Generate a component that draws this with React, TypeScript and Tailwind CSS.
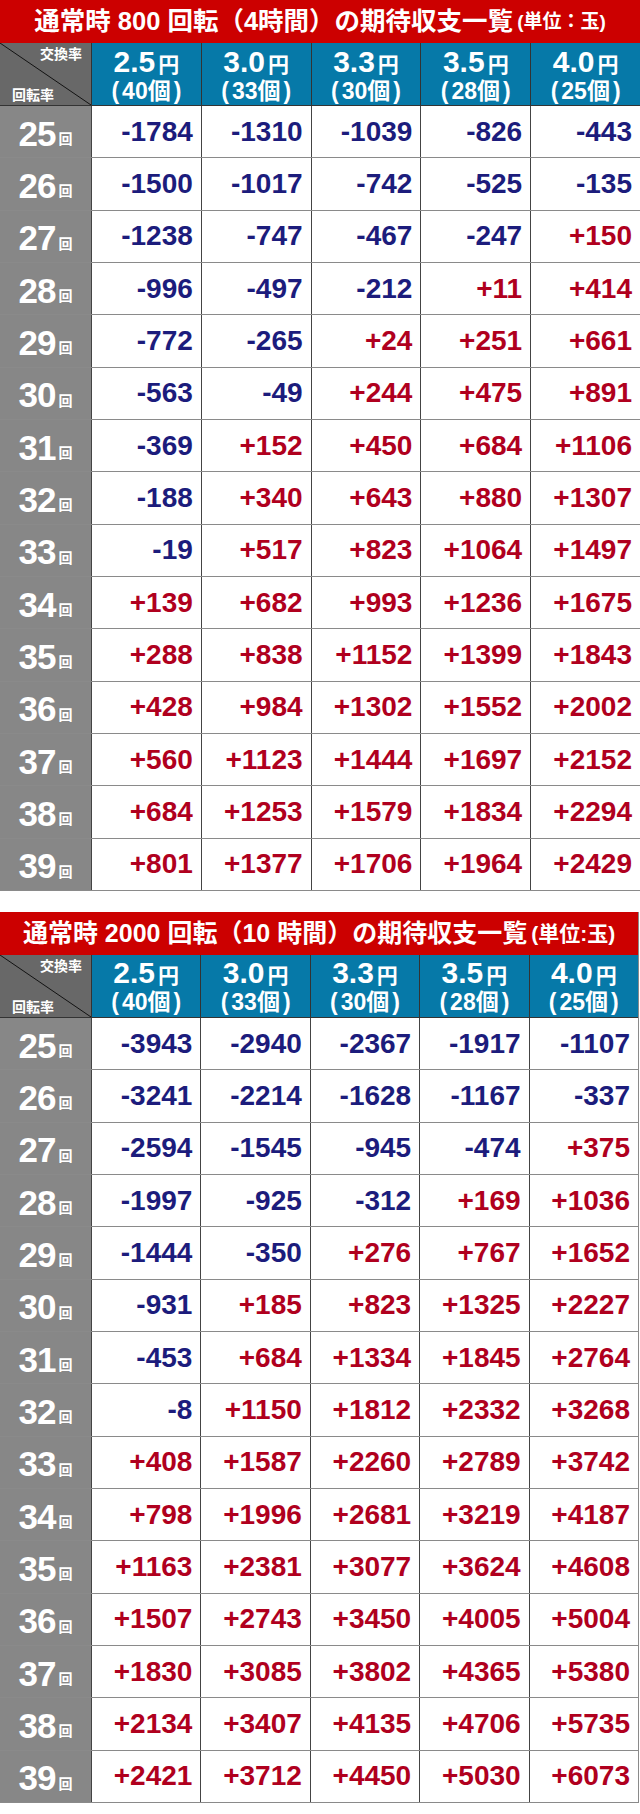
const rates = [
  { yen: '2.5', ko: '40' },
  { yen: '3.0', ko: '33' },
  { yen: '3.3', ko: '30' },
  { yen: '3.5', ko: '28' },
  { yen: '4.0', ko: '25' },
];

const spins = [25, 26, 27, 28, 29, 30, 31, 32, 33, 34, 35, 36, 37, 38, 39];

const table4h = [
  ['-1784', '-1310', '-1039', '-826', '-443'],
  ['-1500', '-1017', '-742', '-525', '-135'],
  ['-1238', '-747', '-467', '-247', '+150'],
  ['-996', '-497', '-212', '+11', '+414'],
  ['-772', '-265', '+24', '+251', '+661'],
  ['-563', '-49', '+244', '+475', '+891'],
  ['-369', '+152', '+450', '+684', '+1106'],
  ['-188', '+340', '+643', '+880', '+1307'],
  ['-19', '+517', '+823', '+1064', '+1497'],
  ['+139', '+682', '+993', '+1236', '+1675'],
  ['+288', '+838', '+1152', '+1399', '+1843'],
  ['+428', '+984', '+1302', '+1552', '+2002'],
  ['+560', '+1123', '+1444', '+1697', '+2152'],
  ['+684', '+1253', '+1579', '+1834', '+2294'],
  ['+801', '+1377', '+1706', '+1964', '+2429'],
];

const table10h = [
  ['-3943', '-2940', '-2367', '-1917', '-1107'],
  ['-3241', '-2214', '-1628', '-1167', '-337'],
  ['-2594', '-1545', '-945', '-474', '+375'],
  ['-1997', '-925', '-312', '+169', '+1036'],
  ['-1444', '-350', '+276', '+767', '+1652'],
  ['-931', '+185', '+823', '+1325', '+2227'],
  ['-453', '+684', '+1334', '+1845', '+2764'],
  ['-8', '+1150', '+1812', '+2332', '+3268'],
  ['+408', '+1587', '+2260', '+2789', '+3742'],
  ['+798', '+1996', '+2681', '+3219', '+4187'],
  ['+1163', '+2381', '+3077', '+3624', '+4608'],
  ['+1507', '+2743', '+3450', '+4005', '+5004'],
  ['+1830', '+3085', '+3802', '+4365', '+5380'],
  ['+2134', '+3407', '+4135', '+4706', '+5735'],
  ['+2421', '+3712', '+4450', '+5030', '+6073'],
];

function HeaderRow() {
  return (
    <div className="grid h-[63px] grid-cols-[91px_repeat(5,minmax(0,1fr))] border-b border-[#333]">
      {/* corner */}
      <div className="relative flex flex-col justify-between bg-[#686868] pt-[4px] pb-[3px] pl-[12px] pr-[9px]">
        <svg className="absolute inset-0 h-full w-full" viewBox="0 0 91 63" preserveAspectRatio="none">
          <line x1="0" y1="0" x2="91" y2="63" stroke="#111" strokeWidth="1" />
        </svg>
        <span className="relative self-end text-[14px] font-bold leading-none text-white">交換率</span>
        <span className="relative self-start text-[14px] font-bold leading-none text-white">回転率</span>
      </div>
      {rates.map(r => (
        <div key={r.yen} className="flex flex-col items-center justify-center border-l border-[#333] bg-[#0679a8] pt-[1px] text-white">
          <div className="flex items-baseline font-bold leading-none">
            <span className="text-[30px]">{r.yen}</span>
            <span className="ml-[3px] text-[21px]">円</span>
          </div>
          <div className="mt-[3px] flex items-center text-[23px] font-bold leading-none">
            <span>(</span>
            <span className="px-[3px]">{r.ko}個</span>
            <span>)</span>
          </div>
        </div>
      ))}
    </div>
  );
}

type TableProps = {
  title: string;
  unit: string;
  data: string[][];
  titleSize: string;
  unitSize: string;
};

function Table({ title, unit, data, titleSize, unitSize }: TableProps) {
  return (
    <div className="flex flex-col">
      <div className="flex h-[43px] items-center justify-center bg-[#cc0000] font-bold text-white">
        <span className={`leading-none ${titleSize}`}>{title}</span>
        <span className={`ml-[4px] leading-none ${unitSize}`}>{unit}</span>
      </div>
      <HeaderRow />
      {data.map((row, i) => (
        <div
          key={spins[i]}
          className="grid h-[52.33px] grid-cols-[91px_repeat(5,minmax(0,1fr))] border-b border-[#8a8a8a]"
        >
          <div className="flex items-center justify-center bg-[#878787] pt-[3px] text-white">
            <span className="text-[35px] font-bold leading-none tracking-[-1px]">{spins[i]}</span>
            <span className="ml-[3px] pt-[12px] text-[14px] font-bold leading-none">回</span>
          </div>
          {row.map((v, j) => (
            <div
              key={j}
              className={`flex items-center justify-end border-l border-[#444] bg-white pr-[8px] text-[28px] font-bold leading-none ${
                v.startsWith('-') ? 'text-[#1c1c7c]' : 'text-[#b0001e]'
              }`}
            >
              {v}
            </div>
          ))}
        </div>
      ))}
    </div>
  );
}

export default function App() {
  return (
    <div className="flex w-[640px] flex-col gap-[21px] bg-white pb-[11px] font-['Liberation_Sans','Noto_Sans_CJK_JP',sans-serif]">
      <Table
        title="通常時 800 回転（4時間）の期待収支一覧"
        unit="(単位：玉)"
        titleSize="text-[25.5px]"
        unitSize="text-[19px]"
        data={table4h}
      />
      <div className="w-[639px] border-r border-[#8a8a8a]">
        <Table
          title="通常時 2000 回転（10 時間）の期待収支一覧"
          unit="(単位:玉)"
          titleSize="text-[25px]"
          unitSize="text-[21px]"
          data={table10h}
        />
      </div>
    </div>
  );
}
